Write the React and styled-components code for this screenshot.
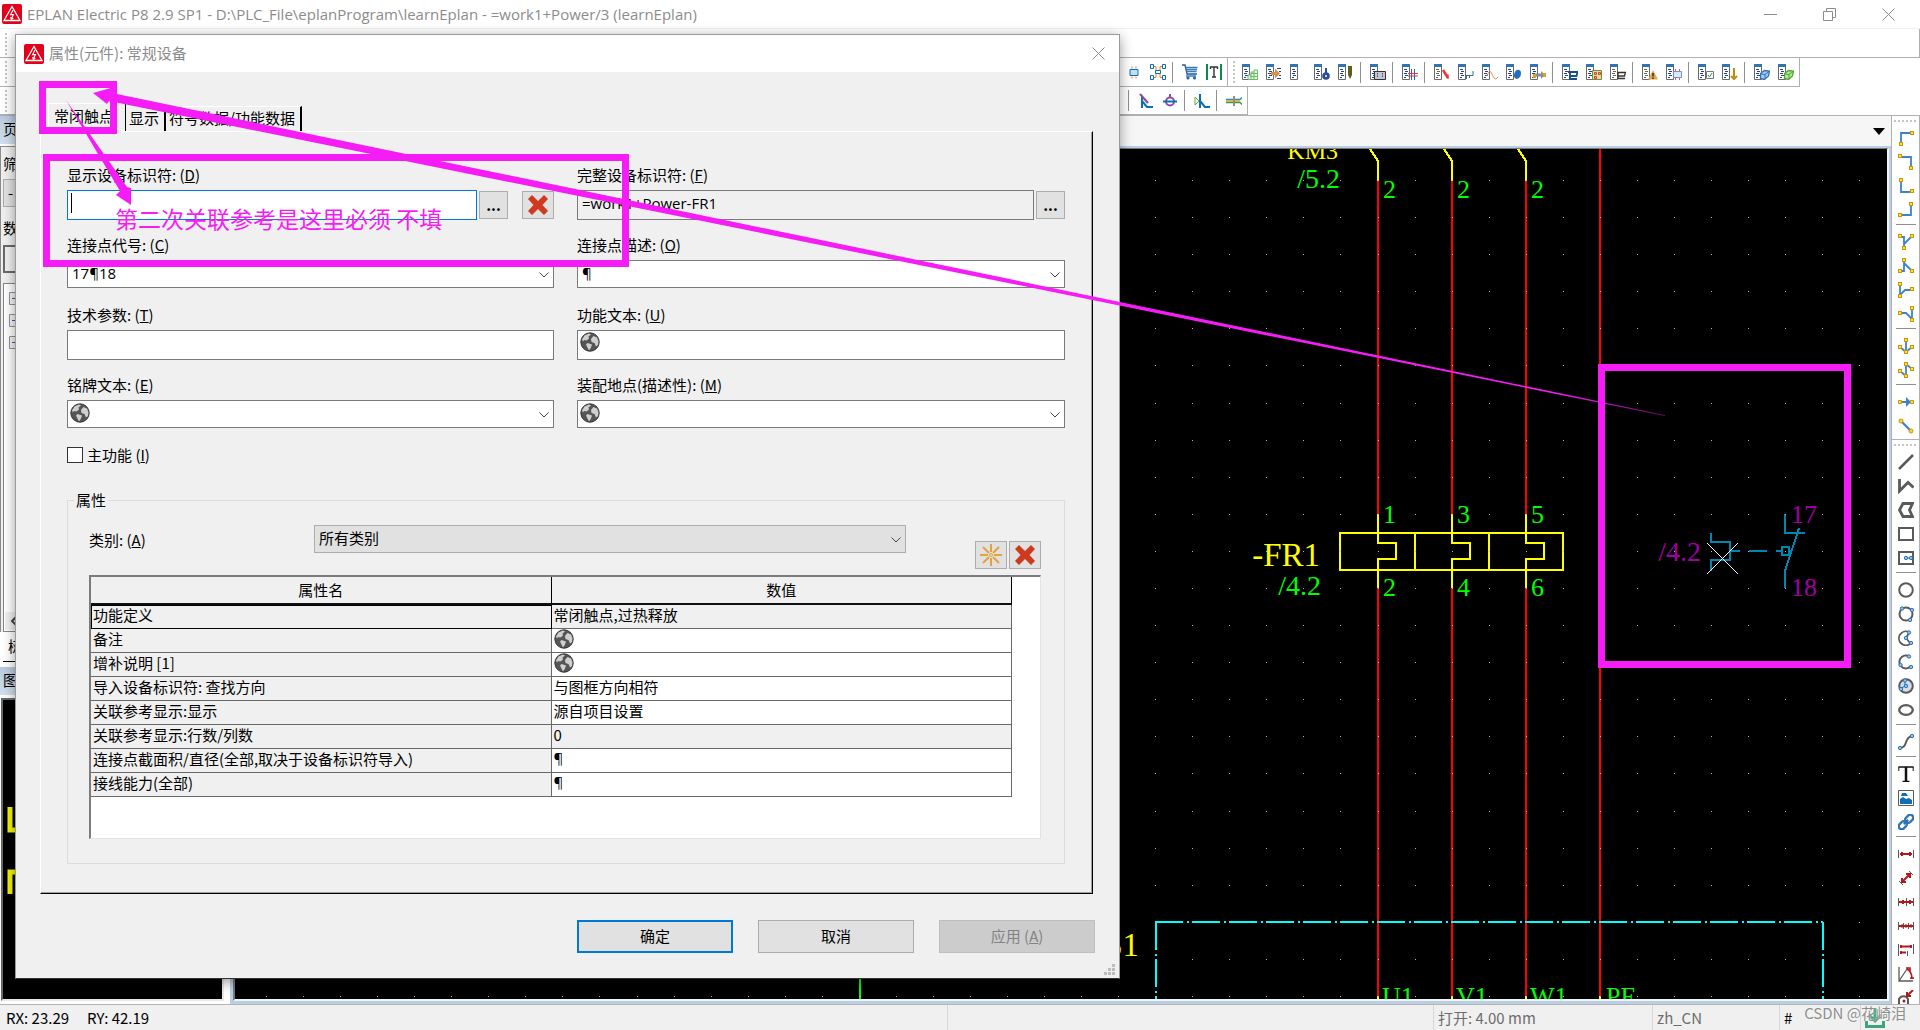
import React from "react";
import styled, { createGlobalStyle, css } from "styled-components";

const SANS = '"Noto Sans CJK SC", "Open Sans", sans-serif';
const LATIN = '"Open Sans", "Noto Sans CJK SC", sans-serif';
const SERIF = '"Liberation Serif", "Noto Sans CJK SC", serif';
const MAGENTA = "#f51cf5";

const Global = createGlobalStyle`
  *, *::before, *::after { box-sizing: border-box; }
  body { margin: 0; background: #fff; font: 15px/24px ${SANS}; color: #000; }
  button, input, select { font: inherit; color: inherit; margin: 0; border-radius: 0; }
  svg { display: block; flex: none; }
`;

/* ---------- application frame ---------- */
const Shell = styled.div`
  position: relative;
  display: flex;
  flex-direction: column;
  height: 100vh;
  overflow: hidden;
`;
const TitleBar = styled.header`
  display: flex;
  align-items: center;
  height: 29px;
  flex: none;
  padding: 0 5px 0 2px;
  gap: 5px;
  color: #8c8c8c;
  border-bottom: 1px solid #f0f0f0;
`;
const Title = styled.h1`
  margin: 0;
  flex: 1;
  font-family: ${LATIN};
  font-size: 15px;
  font-weight: 400;
  line-height: 27px;
  white-space: nowrap;
`;
const DialogName = styled.h2`
  margin: 0;
  flex: 1;
  height: 27px;
  font-size: 15px;
  font-weight: 400;
  line-height: 25px;
`;
const BareButton = styled.button`
  display: flex;
  align-items: center;
  justify-content: center;
  width: ${(p) => p.$w || 24}px;
  height: 24px;
  padding: 0;
  border: 0;
  background: none;
  flex: none;
`;
const MenuRow = styled.nav`
  display: flex;
  height: 29px;
  flex: none;
  padding: 4px;
  border-bottom: 1px solid #b0b0b4;
  border-right: 1px solid #b0b0b4;
`;
const ToolRow = styled.div`
  display: flex;
  height: 29px;
  flex: none;
  ${(p) => p.$line && css`border-bottom: 1px solid #b0b0b4;`}
`;
const ToolGroup = styled.div`
  display: flex;
  align-items: center;
  justify-content: flex-end;
  flex: 0 0 ${(p) => p.$w || "auto"};
  padding: 0 1px 0 4px;
  border-right: 1px solid #b0b0b4;
  border-bottom: 1px solid #b0b0b4;
`;
const Grip = styled.span`
  flex: none;
  ${(p) =>
    p.$across
      ? css`width: 23px; height: 2px; margin: 4px 0; background: repeating-linear-gradient(90deg, #c4c4c4 0 2px, transparent 2px 4px);`
      : css`width: 2px; height: 22px; margin: 0 3px 0 1px; background: repeating-linear-gradient(#c4c4c4 0 2px, transparent 2px 4px);`}
  ${(p) => p.$lead && css`margin-right: auto;`}
`;
const Divider = styled.span`
  flex: none;
  background: #909090;
  ${(p) =>
    p.$across
      ? css`width: 20px; height: 1px; margin: 2px 0 5px;`
      : css`width: 1px; height: 21px; margin: 0 5px 0 2px;`}
`;
const Main = styled.main`
  display: flex;
  flex: 1;
  min-height: 0;
`;

/* ---------- navigator at the left ---------- */
const SidePane = styled.aside`
  display: flex;
  flex-direction: column;
  width: 230px;
  flex: none;
  background: #fff;
`;
const PaneHead = styled.h2`
  margin: 0;
  height: 28px;
  flex: none;
  padding-left: 3px;
  font-size: 15px;
  font-weight: 400;
  line-height: 26px;
  background: linear-gradient(#b8cbde, #d2e0ef);
`;
const Filter = styled.section`
  display: flex;
  flex-direction: column;
  height: 486px;
  flex: none;
  margin-top: 2px;
  padding: 4px 2px 0;
  background: #f0f0f0;
  border: 1px solid #8c8c8c;
  border-width: 1px 0 0 1px;
`;
const FilterLabel = styled.label`
  height: 28px;
  line-height: 26px;
  margin-bottom: ${(p) => p.$gap || 0}px;
`;
const FilterButton = styled.button`
  height: 28px;
  margin-bottom: 8px;
  padding: 0 4px;
  text-align: left;
  line-height: 24px;
  background: #e1e1e1;
  border: 1px solid #adadad;
`;
const FilterInput = styled.input`
  height: 28px;
  flex: none;
  background: #f0f0f0;
  border: 2px solid #696969;
`;
const Tree = styled.div`
  display: flex;
  flex-direction: column;
  gap: 9px;
  flex: 1;
  margin-top: 10px;
  padding: 8px 5px;
  background: #fff;
  border: 1px solid #828790;
`;
const TreeFoot = styled.div`
  margin: auto -4px -7px;
  padding: 3px 5px;
  background: #f0f0f0;
`;
const PaneTab = styled.div`
  height: 30px;
  flex: none;
  margin: 0 0 5px 3px;
  padding-left: 5px;
  line-height: 28px;
  border-bottom: 1px solid #000;
`;
const Preview = styled.div`
  flex: 1;
  margin: 3px 6px 3px 1px;
  background: #000;
  border: 2px solid #696969;
  border-right-color: #e8e8e8;
  border-bottom-color: #e8e8e8;
  overflow: hidden;
`;

/* ---------- drawing area ---------- */
const Workspace = styled.section`
  display: flex;
  flex-direction: column;
  flex: 1;
  min-width: 0;
`;
const TabStrip = styled.div`
  display: flex;
  align-items: center;
  justify-content: flex-end;
  height: 30px;
  flex: none;
  background: #f6f6f6;
`;
const Frame = styled.div`
  flex: 1;
  min-height: 0;
  border: solid #b9cfe8;
  border-width: 2px 2px 3px 3px;
`;
const Canvas = styled.div`
  height: 100%;
  background: #000;
  border: solid #777;
  border-width: 1px 2px 2px 2px;
  border-right-color: #f4f4f4;
  border-bottom-color: #f4f4f4;
  overflow: hidden;
`;
const SideTools = styled.aside`
  width: 29px;
  flex: none;
  overflow: hidden;
  border: solid #b0b0b4;
  border-width: 0 1px;
`;
const SideGroup = styled.div`
  display: flex;
  flex-direction: column;
  align-items: center;
  padding-bottom: 1px;
  border-bottom: 1px solid #b0b0b4;
`;
const StatusBar = styled.footer`
  display: flex;
  height: 26px;
  flex: none;
  background: #f0f0f0;
  border-top: 1px solid #b4b4b4;
`;
const StatusCell = styled.div`
  display: flex;
  align-items: center;
  gap: 18px;
  flex: ${(p) => (p.$w ? `0 0 ${p.$w}px` : "1")};
  padding-left: ${(p) => (p.$w ? 4 : 6)}px;
  color: ${(p) => (p.$soft ? "#6d6d6d" : "#000")};
  ${(p) => p.$w && css`border-left: 1px solid #d7d7d7;`}
`;

/* ---------- properties dialog ---------- */
const Dialog = styled.section`
  position: absolute;
  left: 15px;
  top: 34px;
  width: 1105px;
  background: #f0f0f0;
  border: 1px solid #9a9a9a;
  border-bottom-color: #333;
  box-shadow: 0 3px 12px rgba(0, 0, 0, 0.4);
`;
const DialogTitle = styled.header`
  display: flex;
  align-items: center;
  gap: 5px;
  height: 37px;
  padding: 0 9px 0 8px;
  color: #8c8c8c;
  background: #fff;
`;
const Tabs = styled.div`
  display: flex;
  align-items: flex-end;
  height: 59px;
  padding-left: 32px;
`;
const Tab = styled.button`
  height: ${(p) => (p.$on ? 28 : 25)}px;
  padding: 0 ${(p) => (p.$on ? 11 : 5)}px ${(p) => (p.$on ? 4 : 2)}px ${(p) => (p.$on ? 5 : 3)}px;
  line-height: 22px;
  background: none;
  white-space: nowrap;
  border: solid #fff;
  border-width: 1px 0 0 ${(p) => (p.$on ? 1 : 0)}px;
  border-right: ${(p) => (p.$on ? 1 : 2)}px solid #000;
`;
const Panel = styled.div`
  margin: 0 26px 0 24px;
  padding: 31px 27px 29px 26px;
  border: 1px solid #fff;
  border-right-color: #000;
  border-bottom-color: #000;
  box-shadow: inset -1px -1px 0 #a0a0a0;
`;
const FormGrid = styled.div`
  display: grid;
  grid-template-columns: 487px 488px;
  grid-auto-rows: 70px;
  column-gap: 23px;
`;
const Field = styled.div`
  display: flex;
  flex-direction: column;
  gap: 2px;
`;
const Label = styled.label`
  height: 25px;
  line-height: 23px;
`;
const Line = styled.div`
  display: flex;
  align-items: center;
  position: relative;
  gap: 2px;
`;
const TextBox = styled.input`
  flex: 1;
  min-width: 0;
  height: 30px;
  padding: 0 4px 4px;
  font-family: ${LATIN};
  background: ${(p) => (p.readOnly ? "#f0f0f0" : "#fff")};
  border: 1px solid ${(p) => (p.$active ? "#0078d7" : "#7a7a7a")};
  outline: none;
`;
const Combo = styled.select`
  appearance: none;
  flex: 1;
  width: 100%;
  height: 28px;
  padding: 0 24px 2px 4px;
  font-family: ${(p) => (p.$flat ? SANS : LATIN)};
  line-height: 24px;
  background: ${(p) => (p.$flat ? "#e1e1e1" : "#fff")};
  border: 1px solid ${(p) => (p.$flat ? "#adadad" : "#7a7a7a")};
`;
const Over = styled.span`
  position: absolute;
  pointer-events: none;
  top: ${(p) => p.$top}px;
  ${(p) => (p.$right ? css`right: ${p.$right}px;` : css`left: 3px;`)}
`;
const Caret = styled.span`
  position: absolute;
  left: 4px;
  top: 3px;
  width: 1px;
  height: 20px;
  background: #000;
`;
const SmallButton = styled.button`
  display: flex;
  align-items: center;
  justify-content: center;
  width: ${(p) => (p.$wide ? 32 : 29)}px;
  height: 28px;
  flex: none;
  padding: 0;
  margin-left: ${(p) => p.$gap || 0}px;
  font-weight: 700;
  line-height: 24px;
  background: #e1e1e1;
  border: 1px solid #adadad;
`;
const CheckRow = styled.label`
  display: flex;
  align-items: center;
  gap: 4px;
  height: 26px;
  padding-bottom: 2px;
`;
const Check = styled.input`
  appearance: none;
  width: 16px;
  height: 16px;
  background: #fff;
  border: 1px solid #333;
`;
const Group = styled.fieldset`
  margin: 20px 0 0;
  padding: 0 23px 24px 21px;
  border: 1px solid #dcdcdc;
`;
const Legend = styled.legend`
  height: 23px;
  margin-left: -15px;
  padding: 0 2px;
  line-height: 21px;
`;
const CategoryRow = styled.div`
  display: flex;
  align-items: flex-start;
  gap: 2px;
  height: 44px;
  margin-top: 13px;
`;
const CategoryLabel = styled.label`
  width: 223px;
  line-height: 30px;
`;
const CategoryPick = styled.div`
  position: relative;
  display: flex;
  flex: 0 0 592px;
  margin-right: auto;
`;
const ButtonSet = styled.div`
  display: flex;
  gap: 2px;
  align-self: flex-end;
`;
const TableBox = styled.div`
  min-height: 264px;
  margin-top: 6px;
  padding-right: 28px;
  background: #fff;
  border: 1px solid #e3e3e3;
  border-width: 2px 1px 1px 2px;
  border-top-color: #7c7c7c;
  border-left-color: #7c7c7c;
`;
const Table = styled.table`
  width: 100%;
  table-layout: fixed;
  border-spacing: 0;
`;
const Head = styled.th`
  height: 28px;
  padding: 0;
  font-weight: 400;
  line-height: 24px;
  background: #f0f0f0;
  border-right: 1px solid #000;
  border-bottom: 2px solid #111;
`;
const Cell = styled.td`
  height: 24px;
  padding: 0 2px;
  font-family: ${(p) => (p.$latin ? LATIN : SANS)};
  line-height: 19px;
  vertical-align: top;
  white-space: nowrap;
  background: ${(p) => (p.$grey ? "#f0f0f0" : "#fff")};
  border-right: 1px solid #696969;
  border-bottom: 1px solid #696969;
  ${(p) => p.$picked && css`outline: 1px solid #000; outline-offset: -1px;`}
`;
const Footer = styled.footer`
  display: flex;
  justify-content: flex-end;
  gap: 25px;
  padding: 26px 24px 25px;
`;
const PushButton = styled.button`
  width: 156px;
  height: 33px;
  padding: 0 0 2px;
  background: #e1e1e1;
  border: ${(p) => (p.$main ? "2px solid #0078d7" : "1px solid #adadad")};
  &:disabled { color: #838383; background: #cccccc; border-color: #bfbfbf; }
`;
const SizeGrip = styled.span`
  position: absolute;
  right: 3px;
  bottom: 2px;
`;

/* ---------- review marks over the window ---------- */
const Marks = styled.div`
  position: absolute;
  inset: 0;
  pointer-events: none;
`;
const MarkBox = styled.div`
  position: absolute;
  left: ${(p) => p.$x}px;
  top: ${(p) => p.$y}px;
  width: ${(p) => p.$w}px;
  height: ${(p) => p.$h}px;
  border: 7px solid ${MAGENTA};
`;
const MarkText = styled.p`
  position: absolute;
  left: 115px;
  top: 202px;
  margin: 0;
  font-size: 23px;
  line-height: 32px;
  color: ${MAGENTA};
`;
const Arrows = styled.svg`
  position: absolute;
  inset: 0;
`;
const Watermark = styled.span`
  position: absolute;
  right: 14px;
  bottom: 5px;
  font-size: 15px;
  line-height: 24px;
  color: #8e8e8e;
  text-shadow: 0 0 2px #fff;
`;

/* ---------- icons ---------- */
const Svg = ({ s = 16, children, ...r }) => (
  <svg width={s} height={s} viewBox="0 0 16 16" fill="none" {...r}>{children}</svg>
);
const Logo = () => (
  <svg width="20" height="20" viewBox="0 0 20 20" fill="none">
    <rect width="20" height="20" rx="2" fill="#e2001a" />
    <path d="M10 2.5 18 16.5H2Z" stroke="#fff" strokeWidth="1.3" />
    <path d="M11 6 8.6 10.6h2.8L9.4 15M8.6 13l.7 2.4 2-1.2" stroke="#fff" strokeWidth="1.1" />
  </svg>
);
const CloseX = ({ s = 13 }) => (
  <svg width={s} height={s} viewBox="0 0 13 13" stroke="#8c8c8c" fill="none"><path d="M.5.5l12 12M12.500.5l-12 12" /></svg>
);
const RedX = () => (
  <svg width="20" height="20" viewBox="0 0 20 20" fill="#cf3a1e">
    <path d="M4 0 10 6 16 0 20 4 14.500 10 20 16 16 20 10 14 4 20 0 16 5.500 10 0 4Z" />
  </svg>
);
const Star = () => (
  <svg width="22" height="22" viewBox="0 0 22 22" stroke="#e2a33c" strokeWidth="2" fill="none">
    <path d="M11 0v8M11 14v8M0 11h8M14 11h8M3 3l6 6M13 13l6 6M19 3l-6 6M9 13l-6 6" />
    <circle cx="11" cy="11" r="1.500" strokeWidth="1" />
  </svg>
);
const Globe = () => (
  <svg width="20" height="20" viewBox="0 0 20 20">
    <circle cx="10" cy="10" r="9.200" fill="#555" stroke="#333" />
    <path d="M2 7.500 4.500 3.500 9 1.500 11 2.500 8.500 4.500 9 6.500 6.500 8.500 4 8 3 9.500ZM13.500 4l3.500 1.500 1.500 4-.5 3.500-2 1.500-1.500-3.500-3-1-.5-3ZM7.500 11l4.500 1.500-1 3L9 18.500 7.500 15.500 6 12.500Z" fill="#cfcfcf" />
  </svg>
);
const Chevron = () => (
  <svg width="10" height="6" viewBox="0 0 10 6" fill="none" stroke="#444"><path d="M.5.5 5 5 9.500.5" /></svg>
);
const Expander = () => (
  <svg width="13" height="13" viewBox="0 0 13 13" fill="#f4f4f4" stroke="#919191"><path d="M.5.5h12v12H.5z" /><path d="M3 6.500h7" stroke="#2f5fae" /></svg>
);

const Doc = ({ grey, children }) => (
  <Svg>
    <path d="M.5 1v14.500h7V1" fill="#fff" stroke="#6a6a6a" />
    <path d="M0 0h8v3H0z" fill="#2f74b5" />
    <path d="M2 5.500h3M3 7.500h3M2 9.500h3M3 11.500h3M2 13.500h2" stroke={grey ? "#666" : "#22409a"} />
    {children}
  </Svg>
);
const O = "#e07b39";
const B = "#0a6fb8";

const barOne = [
  ["元件", <Svg><path d="M4 5.500h8v6H4z" stroke={B} fill="#c6dff2" /><path d="M6 2.500v2M10 2.500v2M6 12.500v2M10 12.500v2" stroke={O} /></Svg>],
  ["网络", <Svg><path d="M3 2.500h3v4M13 2.500h-3v4M3 13.500h3v-4M13 13.500h-3v-4" stroke={O} /><path d="M.5.5h3v4h-3zM12.500.5h3v4h-3zM.5 11.500h3v4h-3zM12.500 11.500h3v4h-3zM5.500 6.500h5v3h-5z" stroke={B} fill="#fff" /></Svg>],
  null,
  ["部件", <Svg><path d="M0 1h3l2 9h10" stroke="#24588f" strokeWidth="1.300" /><path d="M3.500 3.500h12M4 5.500h11M4.500 7.500h10M4 12h10" stroke="#3a7cbd" strokeWidth="1.300" /><circle cx="6" cy="14" r="1.600" fill="#2568a8" /><circle cx="12.500" cy="14" r="1.600" fill="#2568a8" /></Svg>],
  ["文本", <Svg><path d="M1 0v16M15 0v16" stroke="#0b8a4b" strokeWidth="2" /><path d="M4 3h8M8 3v10M6 13h4M4.500 3v2M11.500 3v2" stroke="#333" strokeWidth="1.400" /></Svg>],
];
const barTwo = [
  ["表格", <Doc><path d="M6 15V11h3V8h3V6h3.500v9.500H6M9 11v4M12 8v7M8 12.500h7M9 9.500h6" stroke="#6dbb6d" fill="#e6f5e2" /></Doc>],
  ["导入", <Doc><path d="M5 8h4V4.500l5 5-5 5V11H5z" fill="#dd8c4a" /><path d="M11 4.500h4M13 7.500h2M13 11.500h2M11 14.500h4" stroke="#22409a" /></Doc>],
  ["页", <Doc />],
  ["设备", <Doc><path d="M12 4v6" stroke="#2a4c9c" strokeWidth="2" /><circle cx="12" cy="12" r="3.800" fill="#2a4c9c" /><circle cx="12" cy="12" r="1" fill="#fff" /></Doc>],
  ["编辑", <Doc><path d="M10 2h4v9l-2 4-2-4z" fill="#5a6321" /></Doc>],
  null,
  ["端子", <Doc><path d="M4.500 7.500h11v8h-11z" fill="#b8cbd9" stroke="#333" /><path d="M7.500 9v5M12.500 9v5" stroke="#c22" strokeDasharray="1.500 1" /></Doc>],
  null,
  ["电缆", <Doc><path d="M9.500 5v11M12.500 5v11" stroke={B} /><path d="M6 9.500h10M6 12h10" stroke="#e33" /></Doc>],
  null,
  ["插头", <Doc grey><path d="M9 6l5 8" stroke="#e33" strokeWidth="2.500" /><path d="M14 10v5" stroke="#e33" /></Doc>],
  ["连接", <Doc><path d="M7 11.500h8V7M8.500 11v4M11.500 11v3" stroke="#3a7080" /></Doc>],
  ["信号", <Doc><path d="M5 12c2-6 3-6 5-2s3 7 6 3" stroke="#dd8c4a" /></Doc>],
  ["流体", <Doc><path d="M9 8c1-3 6-3 6 1 0 3-1 5-4 6-3 0-4-4-2-7z" fill="#2470b8" /></Doc>],
  ["转移", <Doc><path d="M5 9.500h6V7l4 4-4 4v-2.500H5z" fill="#8a8aa0" /><path d="M3 10h3v4H3zM13 9h3v4h-3z" fill="#d9a520" /></Doc>],
  null,
  ["采购", <Doc><path d="M6 8h9.500l-1 4H8M8 8v7h7" stroke="#174f86" strokeWidth="1.800" /></Doc>],
  ["布局", <Doc><path d="M6.500 6.500h9v9h-9z" fill="#dcdcae" stroke="#7a8a3a" /><path d="M8.500 8.500h2v2h-2zM12.500 8.500h2v2h-2zM8.500 12.500h2v2h-2z" stroke="#d2451e" fill="#f5b28a" /></Doc>],
  ["清单", <Doc grey><path d="M7 8.500h8.500l-1 3.500H8M8 8v6.500h7" stroke="#333" strokeWidth="1.300" /></Doc>],
  null,
  ["消息", <Doc grey><path d="M11 6l5 9.500H6z" fill="#e8a552" /><path d="M11 9v3.500M11 13.500v1.500" stroke="#222" strokeWidth="1.400" /></Doc>],
  ["芯片", <Doc><path d="M7.500 7.500h8v6h-8z" fill="#dce9fa" stroke="#6d97c6" /><path d="M9.500 5v2M13.500 5v2M9.500 14v2M13.500 14v2" stroke="#e55" /></Doc>],
  null,
  ["检查", <Doc><path d="M8.500 7.500h7v7h-7z" fill="#fff" stroke="#777" /><path d="M10 11l1.500 2L14 9" stroke="#2a9a55" /></Doc>],
  ["更新", <Doc><path d="M12 4v9M9 12l3 3 3-3" stroke="#c08a10" strokeWidth="2" /></Doc>],
  null,
  ["三维", <Doc><path d="M6.500 9.500l4-3 5 .5-1 5-4 3.500-4-1z" fill="#a9cbee" stroke="#2f6fb5" strokeWidth="1.300" /><path d="M7 10l4 .5 4-3M11 10.500v4" stroke="#2f6fb5" /></Doc>],
  ["宏", <Doc><path d="M6.500 9.500l4-3 5 .5-1 5-4 3.500-4-1z" fill="#b6e29a" stroke="#4fa82e" strokeWidth="1.300" /><path d="M7 10l4 .5 4-3M11 10.500v4" stroke="#4fa82e" /></Doc>],
];
const barThree = [
  ["中断点", <Svg><path d="M4 3v12M4 8l5 6h6" stroke={B} strokeWidth="2" /><path d="M2 1l8 9" stroke="#8a4fa3" strokeWidth="2.200" /></Svg>],
  ["定义点", <Svg><circle cx="8" cy="8.500" r="4" stroke="#8a4fa3" strokeWidth="2" /><path d="M8 1v4" stroke="#8a4fa3" strokeWidth="2" /><path d="M1 8.500h14" stroke={B} strokeWidth="2" /></Svg>],
  null,
  ["分支", <Svg><path d="M1 4v8l4-4z" stroke="#5fae3c" /><path d="M6 1v14M6 8l5 6h5" stroke={B} strokeWidth="2" /></Svg>],
  null,
  ["电缆定义", <Svg><path d="M0 6.500h14l2-2" stroke="#2a8ac0" strokeWidth="1.500" /><path d="M0 8h14" stroke="#e0b020" strokeWidth="1.500" /><path d="M0 9.500h14l2 2" stroke="#3a9a4a" strokeWidth="1.500" /><path d="M8 3v10" stroke="#a5877a" strokeWidth="2" /></Svg>],
];

const Wire = ({ d, dots }) => (
  <Svg>
    <path d={d} stroke="#3e82c8" strokeWidth="1.800" />
    {dots.map(([x, y]) => <rect key={`${x}-${y}`} x={x - 1.5} y={y - 1.5} width="3" height="3" fill="#ffe04a" stroke="#c99700" />)}
  </Svg>
);
const G = "#5a5a5a";
const Knobs = ({ at }) => at.map(([x, y]) => <circle key={`${x}-${y}`} cx={x} cy={y} r="1.700" fill="#8fc2ee" stroke="#2f74b5" />);
const R = "#b3181c";

const sideOne = [
  ["角 右下", <Wire d="M3 14V3h11" dots={[[3, 14], [14, 3]]} />],
  ["角 左下", <Wire d="M2 3h11v11" dots={[[2, 2], [13, 14]]} />],
  ["角 右上", <Wire d="M3 2v12h11" dots={[[3, 2], [14, 13]]} />],
  ["角 左上", <Wire d="M2 13h11V2" dots={[[2, 13], [13, 2]]} />],
  null,
  ["T节点 下", <Wire d="M2 3h4v11M6 10l8-8" dots={[[2, 2], [14, 2], [6, 14]]} />],
  ["T节点 上", <Wire d="M2 13h4V2M6 5l8 8" dots={[[2, 13], [14, 13], [6, 2]]} />],
  ["T节点 右", <Wire d="M2 2v12M2 13l5-5h7" dots={[[2, 2], [2, 14], [14, 7]]} />],
  ["T节点 左", <Wire d="M2 7h6l6 6M14 2v12" dots={[[2, 7], [14, 2], [14, 14]]} />],
  null,
  ["跳线", <Wire d="M8 2v12M2 9l6 5 6-5" dots={[[8, 2], [8, 14], [2, 9], [14, 9]]} />],
  ["对角跳线", <Wire d="M2 9l6 5V2l6 5" dots={[[8, 2], [8, 14], [2, 9], [14, 7]]} />],
  null,
  ["中断", <Svg><path d="M2 8h12" stroke="#3e82c8" strokeWidth="2" /><path d="M8 3l5 5-5 5z" fill="#3e82c8" /><path d="M.5 6.500h3v3h-3zM12.500 6.500h3v3h-3z" fill="#ffe04a" stroke="#c99700" /></Svg>],
  ["直线连接", <Svg><path d="M3 3l10 10" stroke="#3e82c8" strokeWidth="2.200" /><circle cx="3" cy="3" r="2" fill="#ffd23a" stroke="#c99700" /><circle cx="13" cy="13" r="2" fill="#ffd23a" stroke="#c99700" /></Svg>],
];
const sideTwo = [
  ["线", <Svg><path d="M1 15 15 1" stroke={G} strokeWidth="2.500" /></Svg>],
  ["折线", <Svg><path d="M1.500 1v12L10 4.500l5.500 5" stroke={G} strokeWidth="2.800" /></Svg>],
  ["多边形", <Svg><path d="M14.500 1.500H5L1.500 8 5 14.500h9.500L11.500 8z" stroke={G} strokeWidth="2.800" /></Svg>],
  ["长方形", <Svg><path d="M1 2h14v12H1z" stroke={G} strokeWidth="2" /></Svg>],
  ["长方形 中心", <Svg><path d="M1 2h14v12H1z" stroke={G} strokeWidth="2" /><path d="M8 8h6" stroke={B} /><Knobs at={[[8, 8], [13, 8]]} /></Svg>],
  null,
  ["圆", <Svg><circle cx="8" cy="8" r="6.800" stroke={G} strokeWidth="2" /></Svg>],
  ["圆 三点", <Svg><circle cx="8" cy="8" r="6.500" stroke={G} strokeWidth="2" /><Knobs at={[[4, 2.500], [14, 4], [12, 14]]} /></Svg>],
  ["弧 中心", <Svg><path d="M11 2a7 7 0 1 0 1 12M11 3L8 8l4 5" stroke={G} strokeWidth="1.800" /><Knobs at={[[11, 2.500], [8, 8], [13, 13]]} /></Svg>],
  ["弧 三点", <Svg><path d="M11 2.200A6.500 6.500 0 1 0 13 12" stroke={G} strokeWidth="2" /><Knobs at={[[11, 2.500], [2.500, 11], [13, 13]]} /></Svg>],
  ["扇形", <Svg><circle cx="8" cy="8" r="6.800" stroke={G} strokeWidth="2" fill="#d8dde4" /><path d="M7 2v6l-5 3" fill="#bcdcf5" stroke={B} /><Knobs at={[[7, 2.500], [8, 8], [3, 11]]} /></Svg>],
  ["椭圆", <Svg><ellipse cx="8" cy="8" rx="6.800" ry="4.800" stroke={G} strokeWidth="2.300" /></Svg>],
  null,
  ["样条曲线", <Svg><path d="M2 14c8 0 4-11 12-12" stroke={G} strokeWidth="2" /><Knobs at={[[2, 14], [14, 2]]} /></Svg>],
  null,
  ["文本", <Svg><path d="M.5 1h15M4.500 15.300h7" stroke="#111" strokeWidth="1.300" /><path d="M8 1v14" stroke="#111" strokeWidth="2.500" /><path d="M.8 1v4M15.200 1v4" stroke="#111" /></Svg>],
  ["图片", <Svg><path d="M.5.500h15v15H.5z" stroke={G} /><path d="M2 14V9l3-2 3 2 3-1 3 2v4zM4 3h4l2 3H3z" fill={B} /></Svg>],
  ["超链接", <Svg><g transform="rotate(-45 8 8)" stroke="#2f74b5" strokeWidth="2.400"><rect x="-1" y="5" width="9" height="6" rx="3" /><rect x="8" y="5" width="9" height="6" rx="3" /><path d="M5 8h6" /></g></Svg>],
  null,
  ["线性尺寸", <Svg><path d="M.5 4v8M15.500 4v8" stroke={G} /><path d="M2 8h12M4 6v4M12 6v4" stroke={R} strokeWidth="2" /></Svg>],
  ["对齐尺寸", <Svg><path d="M1 11l4 4M11 1l4 4" stroke={G} /><path d="M4 12 12 4M4 8v4h4M8 4h4v4" stroke={R} strokeWidth="2" /></Svg>],
  ["连续尺寸", <Svg><path d="M.5 4v8M8.500 4v8M15.500 4v8" stroke={G} /><path d="M1 8h14M5 6v4M12 6v4" stroke={R} strokeWidth="2" /></Svg>],
  ["增量尺寸", <Svg><path d="M.5 4v8M5.500 5v6M10.500 5v6M15.500 4v8" stroke={G} /><path d="M1 8h14M4 6.500v3M8 6.500v3M13 6.500v3" stroke={R} strokeWidth="2" /></Svg>],
  ["基线尺寸", <Svg><path d="M.5 2v12M15.500 2v10M9.500 9v5" stroke={G} /><path d="M2 4.500h12M2 10.500h6M3 3v3M13 3v3M3 9v3" stroke={R} strokeWidth="1.800" /></Svg>],
  ["角度尺寸", <Svg><path d="M1 1v14h14M1 15 9 3" stroke={G} strokeWidth="1.300" /><path d="M9 3c4 2 5 6 5 10M8 2h4v4M12 12h4" stroke={R} strokeWidth="1.600" /></Svg>],
  ["半径尺寸", <Svg><path d="M1 16V9a5 5 0 0 1 9 0v7" stroke={G} strokeWidth="2" /><path d="M15 0 9 6M9 2v4h4" stroke={R} strokeWidth="2" /><circle cx="6" cy="11" r="1.500" fill={R} /></Svg>],
];

const Tools = ({ items, across }) =>
  items.map((it, i) =>
    it ? <BareButton key={i} type="button" aria-label={it[0]}>{it[1]}</BareButton> : <Divider key={i} $across={across} />
  );

/* ---------- schematic ---------- */
const PHASES = [1378, 1452, 1526];
const dotsPath = (() => {
  let d = "";
  for (let j = 0; j < 23; j++)
    for (let i = 0; i < 44; i++)
      d += `M${Math.round(266 + 37.05 * i)} ${Math.round(180 + 37.09 * j)}h1v1h-1z`;
  return d;
})();

const Schematic = () => (
  <svg width="100%" height="100%" fill="none" strokeWidth="2" fontFamily={SERIF} shapeRendering="crispEdges">
    <g transform="translate(-235 -149)">
      <path d="M860 970v40" stroke="#00ff00" />
      {PHASES.map((x, i) => (
        <g key={x}>
          <path d={`M${x} 181V514M${x} 588V996`} stroke="#ff0000" />
          <path d={`M${x - 8} 149L${x} 161V181M${x} 514V543H${x + 18}V559H${x}V588M${x} 996v8`} stroke="#ffff00" />
          <g fill="#00ff00" fontSize="26">
            <text x={x + 5} y="198">2</text>
            <text x={x + 5} y="523">{[1, 3, 5][i]}</text>
            <text x={x + 5} y="596">{[2, 4, 6][i]}</text>
            <text x={x + 4} y="1005">{["U1", "V1", "W1"][i]}</text>
          </g>
        </g>
      ))}
      <path d="M1600 149V996" stroke="#ff0000" />
      <path d="M1600 996v8M1340 533H1563V570H1340ZM1415 533V570M1489 533V570" stroke="#ffff00" />
      <g fill="#00ff00" fontSize="28">
        <text x="1340" y="188" textAnchor="end">/5.2</text>
        <text x="1321" y="595" textAnchor="end">/4.2</text>
        <text x="1606" y="1005" fontSize="26">PE</text>
      </g>
      <g fill="#ffff00">
        <text x="1338" y="159" fontSize="24" textAnchor="end">KM3</text>
        <text x="1320" y="566" fontSize="33" textAnchor="end">-FR1</text>
        <text x="1139" y="956" fontSize="33" textAnchor="end">B1</text>
      </g>
      <g stroke="#00ffff" strokeDasharray="28 4 2 3">
        <path d="M1155 922H1823" />
        <path d="M1156 922V1010" />
        <path d="M1823 922V1010" />
      </g>
      <path d="M1711 533V542H1730V560H1711V571M1730 551h10M1749 551h18M1776 551h6M1782 547h7v8h-7zM1789 551h3M1785 514V533H1805M1799 528 1785 571V588" stroke="#0086b3" />
      <path d="M1707 543 1738 574M1738 543 1707 574" stroke="#fff" strokeWidth="1" />
      <g fill="#a000a0" fontSize="26">
        <text x="1701" y="561" fontSize="28" textAnchor="end">/4.2</text>
        <text x="1791" y="523">17</text>
        <text x="1791" y="596">18</text>
      </g>
      <path d={dotsPath} fill="#b4b4b4" />
    </g>
  </svg>
);

/* ---------- form data ---------- */
const Key = ({ k }) => <>(<u>{k}</u>)</>;
const rows = [
  ["功能定义", "常闭触点,过热释放", true],
  ["备注", <Globe />],
  ["增补说明 [1]", <Globe />],
  ["导入设备标识符: 查找方向", "与图框方向相符"],
  ["关联参考显示:显示", "源自项目设置"],
  ["关联参考显示:行数/列数", "0", true],
  ["连接点截面积/直径(全部,取决于设备标识符导入)", "¶"],
  ["接线能力(全部)", "¶"],
];

const ComboField = ({ id, label, k, value = "", globe }) => (
  <Field>
    <Label htmlFor={id}>{label}: <Key k={k} /></Label>
    <Line>
      <Combo id={id} defaultValue={value}><option value={value}>{value}</option></Combo>
      {globe && <Over $top={3}><Globe /></Over>}
      <Over $right={5} $top={12}><Chevron /></Over>
    </Line>
  </Field>
);

const Properties = () => (
  <Dialog role="dialog" aria-label="属性(元件): 常规设备">
    <DialogTitle>
      <Logo />
      <DialogName>属性(元件): 常规设备</DialogName>
      <BareButton type="button" aria-label="关闭"><CloseX /></BareButton>
    </DialogTitle>
    <Tabs role="tablist">
      <Tab role="tab" $on>常闭触点</Tab>
      <Tab role="tab">显示</Tab>
      <Tab role="tab">符号数据/功能数据</Tab>
    </Tabs>
    <Panel>
      <FormGrid>
        <Field>
          <Label htmlFor="dt">显示设备标识符: <Key k="D" /></Label>
          <Line>
            <TextBox id="dt" $active />
            <Caret />
            <SmallButton type="button">...</SmallButton>
            <SmallButton type="button" $wide $gap={12} aria-label="删除"><RedX /></SmallButton>
          </Line>
        </Field>
        <Field>
          <Label htmlFor="full">完整设备标识符: <Key k="F" /></Label>
          <Line>
            <TextBox id="full" readOnly value="=work1+Power-FR1" />
            <SmallButton type="button">...</SmallButton>
          </Line>
        </Field>
        <ComboField id="cp" label="连接点代号" k="C" value="17¶18" />
        <ComboField id="cd" label="连接点描述" k="O" value="¶" />
        <Field>
          <Label htmlFor="tech">技术参数: <Key k="T" /></Label>
          <Line><TextBox id="tech" /></Line>
        </Field>
        <Field>
          <Label htmlFor="ft">功能文本: <Key k="U" /></Label>
          <Line><TextBox id="ft" /><Over $top={2}><Globe /></Over></Line>
        </Field>
        <ComboField id="plate" label="铭牌文本" k="E" globe />
        <ComboField id="place" label="装配地点(描述性)" k="M" globe />
      </FormGrid>
      <CheckRow><Check type="checkbox" /><span>主功能 <Key k="I" /></span></CheckRow>
      <Group>
        <Legend>属性</Legend>
        <CategoryRow>
          <CategoryLabel htmlFor="cat">类别: <Key k="A" /></CategoryLabel>
          <CategoryPick>
            <Combo id="cat" $flat><option>所有类别</option></Combo>
            <Over $right={5} $top={12}><Chevron /></Over>
          </CategoryPick>
          <ButtonSet>
            <SmallButton type="button" $wide aria-label="新建"><Star /></SmallButton>
            <SmallButton type="button" $wide aria-label="移除"><RedX /></SmallButton>
          </ButtonSet>
        </CategoryRow>
        <TableBox>
          <Table>
            <thead><tr><Head>属性名</Head><Head>数值</Head></tr></thead>
            <tbody>
              {rows.map(([name, value, locked], i) => (
                <tr key={name}>
                  <Cell $grey $picked={i === 0}>{name}</Cell>
                  <Cell $grey={locked} $latin={value === "¶"}>{value}</Cell>
                </tr>
              ))}
            </tbody>
          </Table>
        </TableBox>
      </Group>
    </Panel>
    <Footer>
      <PushButton type="button" $main>确定</PushButton>
      <PushButton type="button">取消</PushButton>
      <PushButton type="button" disabled>应用 <Key k="A" /></PushButton>
    </Footer>
    <SizeGrip>
      <svg width="12" height="12" fill="#bdbdbd"><path d="M8 0h3v3H8zM4 4h3v3H4zM8 4h3v3H8zM0 8h3v3H0zM4 8h3v3H4zM8 8h3v3H8z" /></svg>
    </SizeGrip>
  </Dialog>
);

export default function App() {
  return (
    <Shell>
      <Global />
      <TitleBar>
        <Logo />
        <Title>EPLAN Electric P8 2.9 SP1 - D:\PLC_File\eplanProgram\learnEplan - =work1+Power/3 (learnEplan)</Title>
        <BareButton $w={54} type="button" aria-label="最小化"><svg width="13" height="13" stroke="#8c8c8c"><path d="M0 6.500h13" /></svg></BareButton>
        <BareButton $w={54} type="button" aria-label="还原"><svg width="13" height="13" fill="none" stroke="#8c8c8c"><path d="M.5 3.500h9v9h-9zM3.500 3V.5h9v9H10" /></svg></BareButton>
        <BareButton $w={54} type="button" aria-label="退出"><CloseX /></BareButton>
      </TitleBar>
      <MenuRow><Grip /></MenuRow>
      <ToolRow>
        <ToolGroup $w="1228px"><Grip $lead /><Tools items={barOne} /></ToolGroup>
        <ToolGroup><Grip /><Tools items={barTwo} /></ToolGroup>
      </ToolRow>
      <ToolRow $line>
        <ToolGroup $w="1248px"><Grip $lead /><Divider /><Tools items={barThree} /></ToolGroup>
      </ToolRow>
      <Main>
        <SidePane>
          <PaneHead>页</PaneHead>
          <Filter>
            <FilterLabel htmlFor="filter">筛</FilterLabel>
            <FilterButton id="filter" type="button">-</FilterButton>
            <FilterLabel htmlFor="amount" $gap={2}>数</FilterLabel>
            <FilterInput id="amount" />
            <Tree>
              <Expander /><Expander /><Expander />
              <TreeFoot><svg width="8" height="12" fill="none" stroke="#444" strokeWidth="2"><path d="M7 1 2 6l5 5" /></svg></TreeFoot>
            </Tree>
          </Filter>
          <PaneTab>树</PaneTab>
          <PaneHead>图</PaneHead>
          <Preview>
            <svg width="40" height="300" fill="none" stroke="#f5f500" strokeWidth="5"><path d="M7 107v23h20M7 194v-22h20" /></svg>
          </Preview>
        </SidePane>
        <Workspace>
          <TabStrip>
            <BareButton type="button" aria-label="页列表"><svg width="12" height="7"><path d="M0 0h12L6 7z" fill="#000" /></svg></BareButton>
          </TabStrip>
          <Frame><Canvas><Schematic /></Canvas></Frame>
        </Workspace>
        <SideTools>
          <SideGroup><Grip $across /><Tools items={sideOne} across /></SideGroup>
          <SideGroup><Grip $across /><Tools items={sideTwo} across /></SideGroup>
        </SideTools>
      </Main>
      <StatusBar>
        <StatusCell><span>RX: 23.29</span><span>RY: 42.19</span></StatusCell>
        <StatusCell $w={486} />
        <StatusCell $w={219} $soft>打开: 4.00 mm</StatusCell>
        <StatusCell $w={127} $soft>zh_CN</StatusCell>
        <StatusCell $w={81}>#</StatusCell>
        <StatusCell $w={60}>
          <svg width="20" height="20" viewBox="0 0 20 20" fill="none" stroke="#3fa37c" strokeWidth="3"><path d="M10 0v12M4 7l6 6 6-6M1.500 13v5.500h17V13" /></svg>
        </StatusCell>
      </StatusBar>
      <Properties />
      <Marks>
        <MarkBox $x={39} $y={81} $w={78} $h={53} />
        <MarkBox $x={43} $y={154} $w={586} $h={113} />
        <MarkBox $x={1598} $y={364} $w={253} $h={304} />
        <Arrows width="1920" height="1030">
          <defs>
            <linearGradient id="fade" gradientUnits="userSpaceOnUse" x1="1560" y1="0" x2="1665" y2="0">
              <stop offset="0" stopColor={MAGENTA} />
              <stop offset="1" stopColor={MAGENTA} stopOpacity="0.4" />
            </linearGradient>
          </defs>
          <path d="M93 93 111 88 112 93 1665 415 1665 416 109 101 107 104Z" fill="url(#fade)" />
          <path d="M66 100 127 187 131 188 131 205 116 195 120 191Z" fill={MAGENTA} />
        </Arrows>
        <MarkText>第二次关联参考是这里必须 不填</MarkText>
        <Watermark>CSDN @花崎泪</Watermark>
      </Marks>
    </Shell>
  );
}
